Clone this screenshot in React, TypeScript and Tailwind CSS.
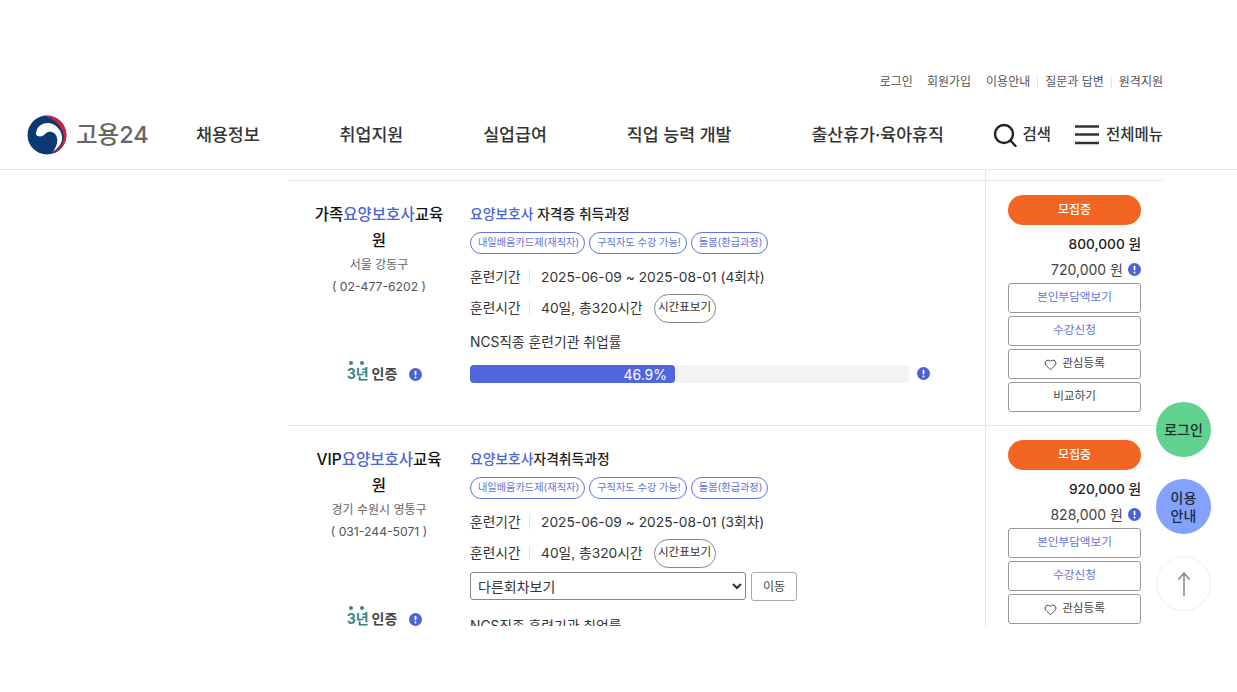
import { Heart } from "lucide-react";

function Info({ className = "" }: { className?: string }) {
  return (
    <svg width="13" height="13" viewBox="0 0 13 13" className={className}>
      <circle cx="6.5" cy="6.5" r="6.5" fill="#4a63d8" />
      <rect x="5.6" y="2.8" width="1.8" height="4.6" rx="0.8" fill="#fff" />
      <circle cx="6.5" cy="9.4" r="1" fill="#fff" />
    </svg>
  );
}

function Logo() {
  return (
    <svg width="40" height="40" viewBox="0 0 40 40" className="shrink-0">
      <circle cx="20" cy="20" r="19.5" fill="#0b3a73" />
      <path d="M20 0.5C31 0.5 39.5 9 39.5 20C39.5 30 32 38.5 22 39.5L40 40L40 0Z" fill="#fff" />
      <path d="M17 0.8C29 -0.5 39.5 8.5 39.5 20C39.5 29 33.5 36.5 25.5 38.8C32.5 34.5 37.5 27 36.5 20C35 11 27 3.5 17 0.8Z" fill="#c8243f" />
      <path d="M9 19C9 12 15 7.5 22 8C30 9 36 17 35 25C34 30 30 34 26 37C29.5 31.5 31 27 30 23C29 18 25 16 21 17C18 18 17 21.5 13 21.5C11 21.5 9 20.5 9 19Z" fill="#fff" />
    </svg>
  );
}

type Course = {
  name: string;
  region: string;
  phone: string;
  title: string;
  round: string;
  price: string;
  sub: string;
  showSelect: boolean;
};

const courses: Course[] = [
  { name: "가족", region: "서울 강동구", phone: "( 02-477-6202 )", title: " 자격증 취득과정", round: "(4회차)", price: "800,000 원", sub: "720,000 원", showSelect: false },
  { name: "VIP", region: "경기 수원시 영통구", phone: "( 031-244-5071 )", title: "자격취득과정", round: "(3회차)", price: "920,000 원", sub: "828,000 원", showSelect: true },
];

const tags = ["내일배움카드제(재직자)", "구직자도 수강 가능!", "돌봄(환급과정)"];
const navItems = ["채용정보", "취업지원", "실업급여", "직업 능력 개발", "출산휴가·육아휴직"];

function CourseRow({ c }: { c: Course }) {
  return (
    <div className="flex h-[245px] shrink-0 border-t border-[#e6e6e6]">
      <div className="w-[182px] shrink-0 px-[25px] pt-[21px] text-center">
        <div className="text-[15.5px] font-medium leading-[26px] text-[#111] break-all">
          {c.name}
          <span className="text-[#4a63d8]">요양보호사</span>교육원
        </div>
        <div className="whitespace-nowrap text-[12px] leading-[22px] text-[#666]">{c.region}</div>
        <div className="whitespace-nowrap text-[12.2px] leading-[22px] text-[#555]">{c.phone}</div>
        <div className="mt-[66px] flex h-5 items-center justify-center pl-[11px]">
          <span className="relative text-[14px] font-bold leading-5 text-[#37867f]">
            3년
            <span className="absolute left-[2px] top-[-3px] h-[4px] w-[4px] rounded-full bg-[#37867f]" />
            <span className="absolute left-[13px] top-[-3px] h-[4px] w-[4px] rounded-full bg-[#37867f]" />
          </span>
          <span className="ml-[3px] text-[14px] font-bold leading-5 text-[#444]">인증</span>
          <Info className="ml-3" />
        </div>
      </div>

      <div className="w-[515px] shrink-0 pt-5">
        <div className="whitespace-pre text-[13.8px] font-medium leading-[26px] text-[#222]">
          <span className="text-[#4a63d8]">요양보호사</span>
          {c.title}
        </div>
        <div className="mt-[5px] flex gap-1">
          {tags.map((t) => (
            <span key={t} className="flex h-[22px] items-center whitespace-nowrap rounded-full border border-[#5f74dd] pl-[7px] pr-[5px] text-[10.2px] text-[#5f74dd]">
              {t}
            </span>
          ))}
        </div>
        <div className="mt-[9px] flex h-7 items-center text-[13.75px] text-[#333]">
          <span className="w-[51px] whitespace-nowrap">훈련기간</span>
          <span className="mx-[8px] h-[14px] w-px bg-[#e2e2e2]" />
          <span className="ml-[3px] whitespace-nowrap">2025-06-09 ~ 2025-08-01 {c.round}</span>
        </div>
        <div className="mt-[3px] flex h-7 items-center text-[13.75px] text-[#333]">
          <span className="w-[51px] whitespace-nowrap">훈련시간</span>
          <span className="mx-[8px] h-[14px] w-px bg-[#e2e2e2]" />
          <span className="ml-[3px] whitespace-nowrap">40일, 총320시간</span>
          <span className="ml-[11px] flex h-[29px] w-[62px] items-center justify-center rounded-full border border-[#888] text-[11.6px] text-[#333]">
            시간표보기
          </span>
        </div>
        {c.showSelect && (
          <div className="mt-[5px] flex gap-[5px]">
            <select className="h-[28px] w-[276px] rounded-[3px] border border-[#888] bg-white pl-[3px] text-[14px] text-[#333]">
              <option>다른회차보기</option>
            </select>
            <button className="h-[29px] w-[46px] rounded-[3px] border border-[#aaa] text-[12px] text-[#444]">이동</button>
          </div>
        )}
        <div className={`${c.showSelect ? "mt-[15px]" : "mt-[10px]"} text-[13.8px] leading-5 text-[#333]`}>NCS직종 훈련기관 취업률</div>
        <div className="mt-[13px] flex items-center">
          <div className="h-[18px] w-[439px] rounded-[4px] bg-[#f3f3f3]">
            <div className="flex h-full w-[205px] items-center justify-end rounded-[4px] bg-[#4f66dc] pr-2 text-[14px] text-white">46.9%</div>
          </div>
          <Info className="ml-2 -mt-[1px]" />
        </div>
      </div>

      <div className="flex w-[178px] shrink-0 flex-col border-l border-[#e6e6e6] pl-[22px] pr-[22px] pt-[14px]">
        <div className="flex h-[30px] items-center justify-center rounded-full bg-[#f26522] text-[12px] font-medium text-white">모집중</div>
        <div className="mt-[9px] text-right text-[13.7px] font-medium leading-5 text-[#222]">{c.price}</div>
        <div className="mt-[6px] flex items-center justify-end gap-[5px] text-[14px] leading-5 text-[#444]">
          {c.sub}
          <Info className="-mt-[2px]" />
        </div>
        <div className="mt-[3px] flex flex-col gap-[3px] text-[11.6px]">
          <button className="h-[30px] rounded-[3px] border border-[#999] text-[#5f74dd]">본인부담액보기</button>
          <button className="h-[30px] rounded-[3px] border border-[#999] text-[#5f74dd]">수강신청</button>
          <button className="flex h-[30px] items-center justify-center gap-[5px] rounded-[3px] border border-[#999] text-[#444]">
            <Heart size={13} strokeWidth={1.8} />
            관심등록
          </button>
          <button className="h-[30px] rounded-[3px] border border-[#999] text-[#444]">비교하기</button>
        </div>
      </div>
    </div>
  );
}

export default function App() {
  return (
    <div className="relative h-[692px] w-[1237px] overflow-hidden bg-white font-['Inter','Noto_Sans_CJK_KR',sans-serif]">
      <div className="flex justify-end pr-[74px] pt-[74px] text-[12px] leading-4 text-[#555]">
        <span>로그인</span>
        <span className="ml-[14px]">회원가입</span>
        <span className="ml-[15px]">이용안내</span>
        <span className="mx-[7px] my-[2px] w-px bg-[#e6e6e6]" />
        <span>질문과 답변</span>
        <span className="mx-[7px] my-[2px] w-px bg-[#e6e6e6]" />
        <span>원격지원</span>
      </div>

      <header className="flex h-[80px] items-center border-b border-[#e9e9e9] pl-[27px] pr-[74px] pt-[11px]">
        <Logo />
        <span className="ml-[9px] w-[120px] text-[23.5px] font-medium leading-none text-[#666]">고용24</span>
        <nav className="flex gap-20 text-[17.3px] font-medium text-[#333]">
          {navItems.map((n) => (
            <span key={n} className="whitespace-nowrap">{n}</span>
          ))}
        </nav>
        <div className="ml-auto flex items-center">
          <svg width="24" height="24" viewBox="0 0 24 24" fill="none" stroke="#222" strokeWidth="2.4" strokeLinecap="round">
            <circle cx="11" cy="11" r="9" />
            <path d="M17.5 17.5L22.5 23" />
          </svg>
          <span className="ml-[5px] text-[15.5px] font-medium text-[#333]">검색</span>
          <svg width="24" height="20" viewBox="0 0 24 20" fill="none" stroke="#333" strokeWidth="2.4" className="ml-6">
            <path d="M0 1.5H24M0 9.5H24M0 18H24" />
          </svg>
          <span className="ml-[7px] text-[15.5px] font-medium text-[#333]">전체메뉴</span>
        </div>
      </header>

      <main className="flex h-[456px] flex-col overflow-hidden pl-[288px] pr-[74px]">
        <div className="ml-[697px] h-[10px] shrink-0 border-l border-[#e6e6e6]" />
        {courses.map((c) => (
          <CourseRow key={c.name} c={c} />
        ))}
      </main>

      <div className="absolute left-[1156px] top-[402px] flex h-[55px] w-[55px] items-center justify-center rounded-full bg-[#5fd28f] text-[14px] font-medium text-[#1f2d2a]">로그인</div>
      <div className="absolute left-[1156px] top-[479px] flex h-[55px] w-[55px] items-center justify-center rounded-full bg-[#83a2fb] text-center text-[14px] font-medium leading-[18px] text-[#1f2a44]">
        이용
        <br />
        안내
      </div>
      <div className="absolute left-[1156px] top-[556px] flex h-[55px] w-[55px] items-center justify-center rounded-full border border-[#eeeeee] bg-white">
        <svg width="14" height="24" viewBox="0 0 14 24" fill="none" stroke="#888" strokeWidth="1.6">
          <path d="M7 24V1M1.5 7.5L7 1L12.5 7.5" />
        </svg>
      </div>
    </div>
  );
}
